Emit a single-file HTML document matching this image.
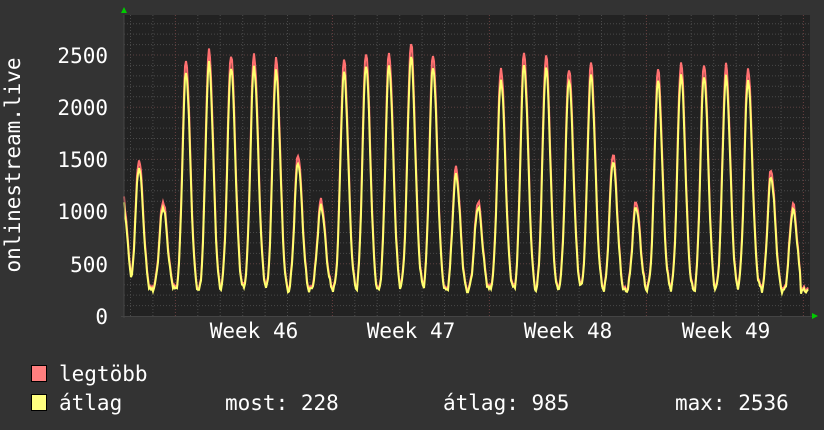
<!DOCTYPE html>
<html><head><meta charset="utf-8"><style>
html,body{margin:0;padding:0;background:#333;}
body{width:824px;height:430px;overflow:hidden;position:relative;font-family:"DejaVu Sans Mono","Liberation Mono",monospace;color:#fff;}
svg{position:absolute;left:0;top:0;}
</style></head><body>
<svg width="824" height="430" xmlns="http://www.w3.org/2000/svg" font-family="DejaVu Sans Mono, Liberation Mono, monospace">
<rect x="0" y="0" width="824" height="430" fill="#333"/>
<rect x="124" y="15" width="686" height="301" fill="#222"/>
<g id="grid"></g>
<g id="data"></g>
<line x1="124" y1="15" x2="124" y2="318" stroke="#444" stroke-width="1"/>
<line x1="121" y1="316.5" x2="812" y2="316.5" stroke="#444" stroke-width="1"/>
<polygon points="121,13 127,13 124,7" fill="#0c0"/>
<polygon points="812,313 812,319 818,316" fill="#0c0"/>
<g font-size="21" fill="#fff" text-anchor="end">
<text x="108" y="63">2500</text>
<text x="108" y="115">2000</text>
<text x="108" y="167">1500</text>
<text x="108" y="219">1000</text>
<text x="108" y="272">500</text>
<text x="108" y="324">0</text>
</g>
<g font-size="21" fill="#fff" text-anchor="middle">
<text x="254" y="338">Week 46</text>
<text x="411" y="338">Week 47</text>
<text x="568" y="338">Week 48</text>
<text x="726" y="338">Week 49</text>
</g>
<text transform="translate(20,165) rotate(-90)" font-size="21" fill="#fff" text-anchor="middle">onlinestream.live</text>
<rect x="31.5" y="365.5" width="15" height="16" fill="#ff7f7f" stroke="#000"/>
<rect x="31.5" y="394.5" width="15" height="16" fill="#ffff7f" stroke="#000"/>
<g font-size="21" fill="#fff">
<text x="59" y="381">legtöbb</text>
<text x="59" y="410">átlag</text>
<text x="225" y="410">most: 228</text>
<text x="443" y="410">átlag: 985</text>
<text x="675" y="410">max: 2536</text>
</g>
</svg>
<script>
function Y(v){return 316-v*0.1044;}
var g=document.getElementById('grid'),s='';
for(var v=100;v<=2800;v+=100){var y=Y(v);if(y<15)break;s+='<line x1="124" x2="810" y1="'+y.toFixed(1)+'" y2="'+y.toFixed(1)+'" stroke="'+(v%500==0?'#5a4040':'#4a4a4a')+'" stroke-dasharray="1,2"/>';}
for(var x=130.5;x<810;x+=22.43){var maj=Math.abs(((x-175.4)/157)-Math.round((x-175.4)/157))<0.02;s+='<line y1="15" y2="316" x1="'+x.toFixed(1)+'" x2="'+x.toFixed(1)+'" stroke="'+(maj?'#6a4040':'#4a4a4a')+'" stroke-dasharray="1,2"/>';}
g.innerHTML=s;
var peaks=[[139,1500],[163,1100],[186,2450],[209,2540],[231,2510],[254,2510],[276,2460],[298,1550],[321,1110],[344,2450],[366,2530],[389,2520],[411,2610],[433,2510],[456,1420],[478,1100],[501,2380],[524,2520],[546,2500],[569,2380],[591,2420],[613,1560],[636,1100],[658,2360],[681,2430],[704,2420],[726,2400],[748,2380],[771,1400],[793,1070]];
function val(x){
 var best=0;
 for(var i=0;i<peaks.length;i++){var d=x-peaks[i][0];var w=d<0?5:6;var t=Math.exp(-Math.pow(Math.abs(d)/w,2));var base=230+30*Math.sin(i*1.7);var v=base+(peaks[i][1]-base)*t;if(v>best)best=v;}
 if(x<134)best=Math.max(best,1150-(x-124)*110);
 if(x>800)best=Math.min(best,260);
 best+=20*Math.sin(x*1.3)+12*Math.sin(x*2.9);
 return Math.max(best,180);
}
var pr='',py='';
for(var x=124;x<=808;x+=1){var v=val(x);pr+=(x==124?'M':'L')+x+' '+Y(v).toFixed(1);py+=(x==124?'M':'L')+x+' '+Y(v*0.955-5).toFixed(1);}
document.getElementById('data').innerHTML='<path d="'+pr+'" fill="none" stroke="#ff7070" stroke-width="2"/><path d="'+py+'" fill="none" stroke="#ffff70" stroke-width="2"/>';
</script>
</body></html>
